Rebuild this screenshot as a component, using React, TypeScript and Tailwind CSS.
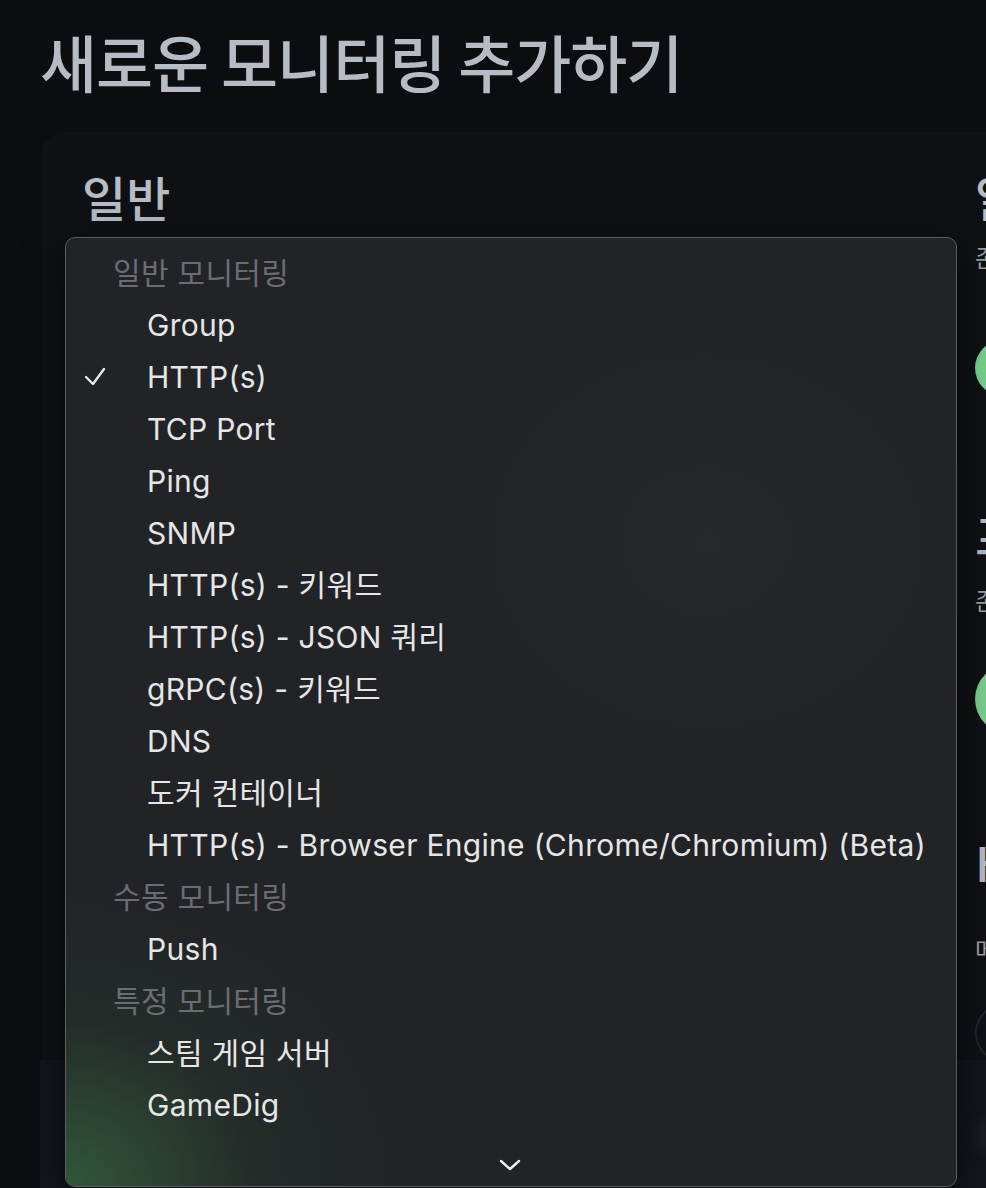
import React from 'react'

type Option =
  | { kind: 'group'; label: string }
  | { kind: 'item'; label: string; checked?: boolean }

const options: Option[] = [
  { kind: 'group', label: '일반 모니터링' },
  { kind: 'item', label: 'Group' },
  { kind: 'item', label: 'HTTP(s)', checked: true },
  { kind: 'item', label: 'TCP Port' },
  { kind: 'item', label: 'Ping' },
  { kind: 'item', label: 'SNMP' },
  { kind: 'item', label: 'HTTP(s) - 키워드' },
  { kind: 'item', label: 'HTTP(s) - JSON 쿼리' },
  { kind: 'item', label: 'gRPC(s) - 키워드' },
  { kind: 'item', label: 'DNS' },
  { kind: 'item', label: '도커 컨테이너' },
  { kind: 'item', label: 'HTTP(s) - Browser Engine (Chrome/Chromium) (Beta)' },
  { kind: 'group', label: '수동 모니터링' },
  { kind: 'item', label: 'Push' },
  { kind: 'group', label: '특정 모니터링' },
  { kind: 'item', label: '스팀 게임 서버' },
  { kind: 'item', label: 'GameDig' },
]

function CheckMark() {
  return (
    <svg width="22" height="22" viewBox="0 0 22 22" className="absolute left-[18px]">
      <polyline
        points="2,11 9,18 20,3"
        fill="none"
        stroke="#e8e8e8"
        strokeWidth="2.4"
        strokeLinecap="round"
        strokeLinejoin="round"
      />
    </svg>
  )
}

function TypeMenu() {
  return (
    <div className="absolute left-[65px] top-[237px] w-[892px] h-[950px] rounded-[10px] border border-[#5b5d60] bg-[#222327] overflow-hidden shadow-[0_10px_40px_rgba(0,0,0,0.6)]">
      {/* wallpaper tint bleeding through the menu */}
      <div className="absolute inset-0 bg-[radial-gradient(ellipse_340px_300px_at_0%_100%,rgba(52,96,62,0.85),rgba(40,60,46,0.35)_55%,transparent_100%)]" />
      <div className="absolute inset-0 bg-[radial-gradient(ellipse_300px_260px_at_72%_32%,rgba(255,255,255,0.025),transparent_100%)]" />
      <div className="relative pt-[9px] font-['Inter','Noto_Sans_CJK_KR',sans-serif] text-[30px] tracking-[0.3px]">
        {options.map((opt, i) =>
          opt.kind === 'group' ? (
            <div key={i} className="h-[52px] flex items-center pl-[47px] text-[#6b6d71]">
              {opt.label}
            </div>
          ) : (
            <div key={i} className="relative h-[52px] flex items-center pl-[81px] text-[#e6e6e6]">
              {opt.checked && <CheckMark />}
              {opt.label}
            </div>
          )
        )}
      </div>
      <svg width="22" height="14" viewBox="0 0 22 14" className="absolute left-[433px] bottom-[14px]">
        <polyline
          points="2,3 11,11 20,3"
          fill="none"
          stroke="#f0f0f0"
          strokeWidth="2.4"
          strokeLinecap="round"
          strokeLinejoin="round"
        />
      </svg>
    </div>
  )
}

export default function App() {
  return (
    <div className="relative w-[986px] h-[1188px] overflow-hidden bg-[#0b0d11] font-['Noto_Sans_CJK_KR','Noto_Sans',sans-serif]">
      <h1 className="pl-[40px] pt-[24px] text-[62px] font-medium leading-[1.2] text-[#b7bcc4] tracking-[-1px]">
        새로운 모니터링 추가하기
      </h1>

      <div className="mt-[34px] ml-[42px] w-[1000px] h-[1100px] rounded-[22px] bg-[#0f1115]">
        <div className="grid grid-cols-[933px_1fr] pt-[36px]">
          <div className="pl-[40px]">
            <h4 className="text-[48px] font-medium leading-[1.2] text-[#b8bdc5]">일반</h4>
          </div>

          {/* notifications / proxy / http options column */}
          <div className="whitespace-nowrap">
            <h4 className="text-[48px] font-medium leading-[1.2] text-[#b8bdc5]">알림</h4>
            <p className="mt-[13px] text-[24px] leading-[1.5] text-[#9ca1a9]">존재하지 않습니다. 설정해 주세요.</p>
            <div className="mt-[65px] h-[56px] w-[200px] rounded-full bg-[#7bd490]" />

            <h4 className="mt-[110px] text-[48px] font-medium leading-[1.2] text-[#b8bdc5]">프록시</h4>
            <p className="mt-[18px] text-[24px] leading-[1.5] text-[#9ca1a9]">존재하지 않습니다. 설정해 주세요.</p>
            <div className="mt-[46px] h-[70px] w-[200px] rounded-full bg-[#7bd490]" />

            <h4 className="mt-[99px] text-[48px] font-medium leading-[1.2] text-[#b8bdc5]">HTTP 옵션</h4>
            <p className="mt-[41px] text-[24px] leading-[1.5] text-[#9ca1a9]">메서드</p>
            <div className="mt-[36px] h-[60px] w-[300px] rounded-full border-2 border-[#1e2532]" />
          </div>
        </div>
      </div>

      {/* sticky save bar */}
      <div className="absolute left-[40px] right-0 top-[1060px] bottom-0 bg-[#14161b]">
        <div className="absolute left-[935px] top-[55px] h-[40px] w-[80px] rounded-full bg-[#1b1e25] blur-[6px]" />
      </div>

      <TypeMenu />
    </div>
  )
}
